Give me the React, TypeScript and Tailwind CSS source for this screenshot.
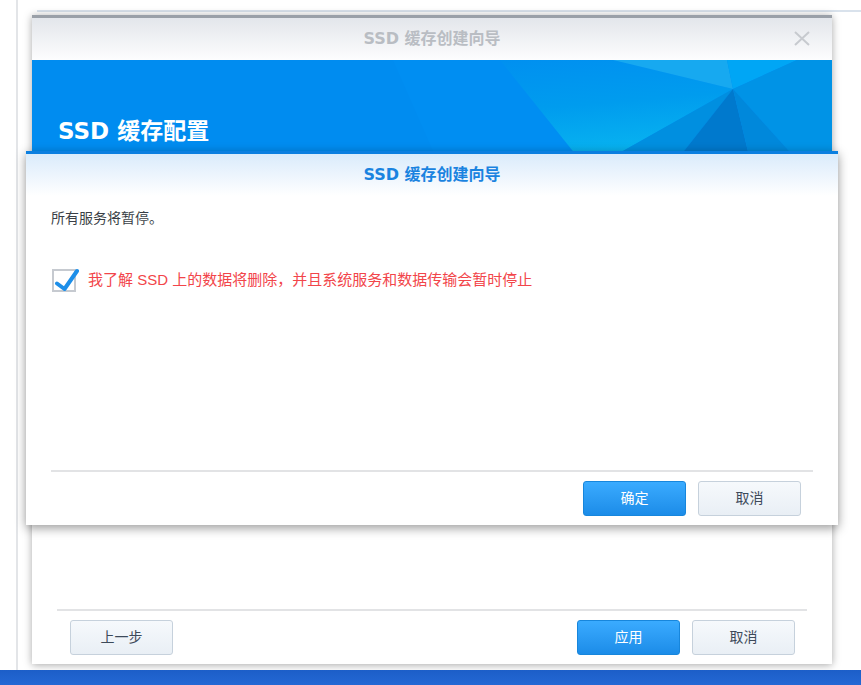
import React from 'react';

const cjk = { fontFamily: '"Liberation Sans", "Noto Sans CJK SC", sans-serif' };
const title = { fontFamily: '"DejaVu Sans", "Noto Sans CJK SC", sans-serif' };

const BlueButton = ({ label }: { label: string }) => (
  <button className="h-[35px] w-[103px] rounded-[3px] border border-[#1786dc] bg-gradient-to-b from-[#3aabff] to-[#1b8ce8] text-[14px] text-white">
    {label}
  </button>
);

const GrayButton = ({ label }: { label: string }) => (
  <button className="h-[35px] w-[103px] rounded-[3px] border border-[#c6d1dc] bg-gradient-to-b from-[#f6f9fc] to-[#e9eff5] text-[14px] text-[#3d4a5a]">
    {label}
  </button>
);

const Banner = () => (
  <div className="relative h-[100px] overflow-hidden bg-[#008ef2]">
    <svg className="absolute inset-0" width="800" height="100" viewBox="0 0 800 100">
      <defs>
        <linearGradient id="cyan" x1="0" y1="0" x2="0.2" y2="1">
          <stop offset="0" stopColor="#0090f0" />
          <stop offset="0.5" stopColor="#009cee" />
          <stop offset="1" stopColor="#08b4f0" />
        </linearGradient>
      </defs>
      <polygon points="0,0 361,0 405,100 0,100" fill="#008cf0" />
      <polygon points="468,0 581,0 701,29 575,100 548,100" fill="url(#cyan)" />
      <polygon points="581,0 695,0 701,29" fill="#17a9f0" />
      <polygon points="695,0 765,0 701,29" fill="#00a6f5" />
      <polygon points="765,0 800,0 800,100 765,100 701,29" fill="#0093e6" />
      <polygon points="701,29 575,100 645,100" fill="#008fe0" />
      <polygon points="701,29 645,100 718,100" fill="#0079cd" />
      <polygon points="701,29 718,100 765,100" fill="#0088db" />
    </svg>
    <div className="relative pl-[26px] pt-[56px] text-[23px] font-bold leading-[30px] text-white" style={title}>
      SSD 缓存配置
    </div>
  </div>
);

const BackWindow = () => (
  <div className="ml-[14px] mt-[3px] flex h-[649px] w-[800px] flex-col border-t-[3px] border-[#9aa0a8] bg-white shadow-[0_1px_8px_rgba(0,0,0,0.35)]">
    <div className="relative flex h-[42px] items-center justify-center bg-gradient-to-b from-[#e3e6eb] to-[#fdfdfe]">
      <span className="text-[16px] font-bold text-[#b9bdc3]" style={title}>
        SSD 缓存创建向导
      </span>
      <svg className="absolute right-[22px] top-[13px]" width="16" height="15" viewBox="0 0 16 15">
        <path d="M1 1 L15 14 M15 1 L1 14" stroke="#c7cacf" strokeWidth="2" />
      </svg>
    </div>
    <Banner />
    <div className="flex-1" />
    <div className="mx-[25px] flex items-center justify-between border-t-2 border-[#e2e3e5] pb-[9px] pt-[9px]">
      <div className="ml-[13px]">
        <GrayButton label="上一步" />
      </div>
      <div className="mr-[12px] flex gap-[12px]">
        <BlueButton label="应用" />
        <GrayButton label="取消" />
      </div>
    </div>
  </div>
);

const ConfirmDialog = () => (
  <div className="absolute left-[26px] top-[151px] flex h-[374px] w-[812px] flex-col border-t-[3px] border-[#0b7fe0] bg-white shadow-[0_3px_10px_rgba(0,0,0,0.4)]">
    <div className="flex h-[42px] items-center justify-center bg-gradient-to-b from-[#daebfb] to-[#ffffff]">
      <span className="text-[16px] font-bold text-[#1a83e0]" style={title}>
        SSD 缓存创建向导
      </span>
    </div>
    <div className="flex-1 px-[25px]">
      <p className="pt-[12px] text-[14px] leading-[20px] text-[#3a3f46]">所有服务将暂停。</p>
      <label className="mt-[39px] flex items-center gap-[9px]">
        <svg width="28" height="26" viewBox="0 0 28 26">
          <rect x="2" y="3" width="22" height="21" fill="#fff" stroke="#c6cad0" strokeWidth="2" />
          <path d="M6 16.5 L13.5 22 L26 4" fill="none" stroke="#1d8fe9" strokeWidth="4" strokeLinejoin="round" strokeLinecap="round" />
        </svg>
        <span className="text-[15px] text-[#f2454a]">我了解 SSD 上的数据将删除，并且系统服务和数据传输会暂时停止</span>
      </label>
    </div>
    <div className="mx-[25px] flex justify-end gap-[12px] border-t-2 border-[#e2e3e5] pb-[9px] pr-[12px] pt-[9px]">
      <BlueButton label="确定" />
      <GrayButton label="取消" />
    </div>
  </div>
);

export default function App() {
  return (
    <div className="relative flex h-[685px] w-full flex-col overflow-hidden bg-white" style={cjk}>
      <div className="ml-[16px] flex-1 border-l-2 border-[#e3e5e8]">
        <div className="ml-[19px] mt-[10px] border-t-2 border-[#d9e2ec]" />
        <BackWindow />
      </div>
      <div className="h-[15px] bg-gradient-to-b from-[#1c5ec8] to-[#2468d4]" />
      <ConfirmDialog />
    </div>
  );
}
